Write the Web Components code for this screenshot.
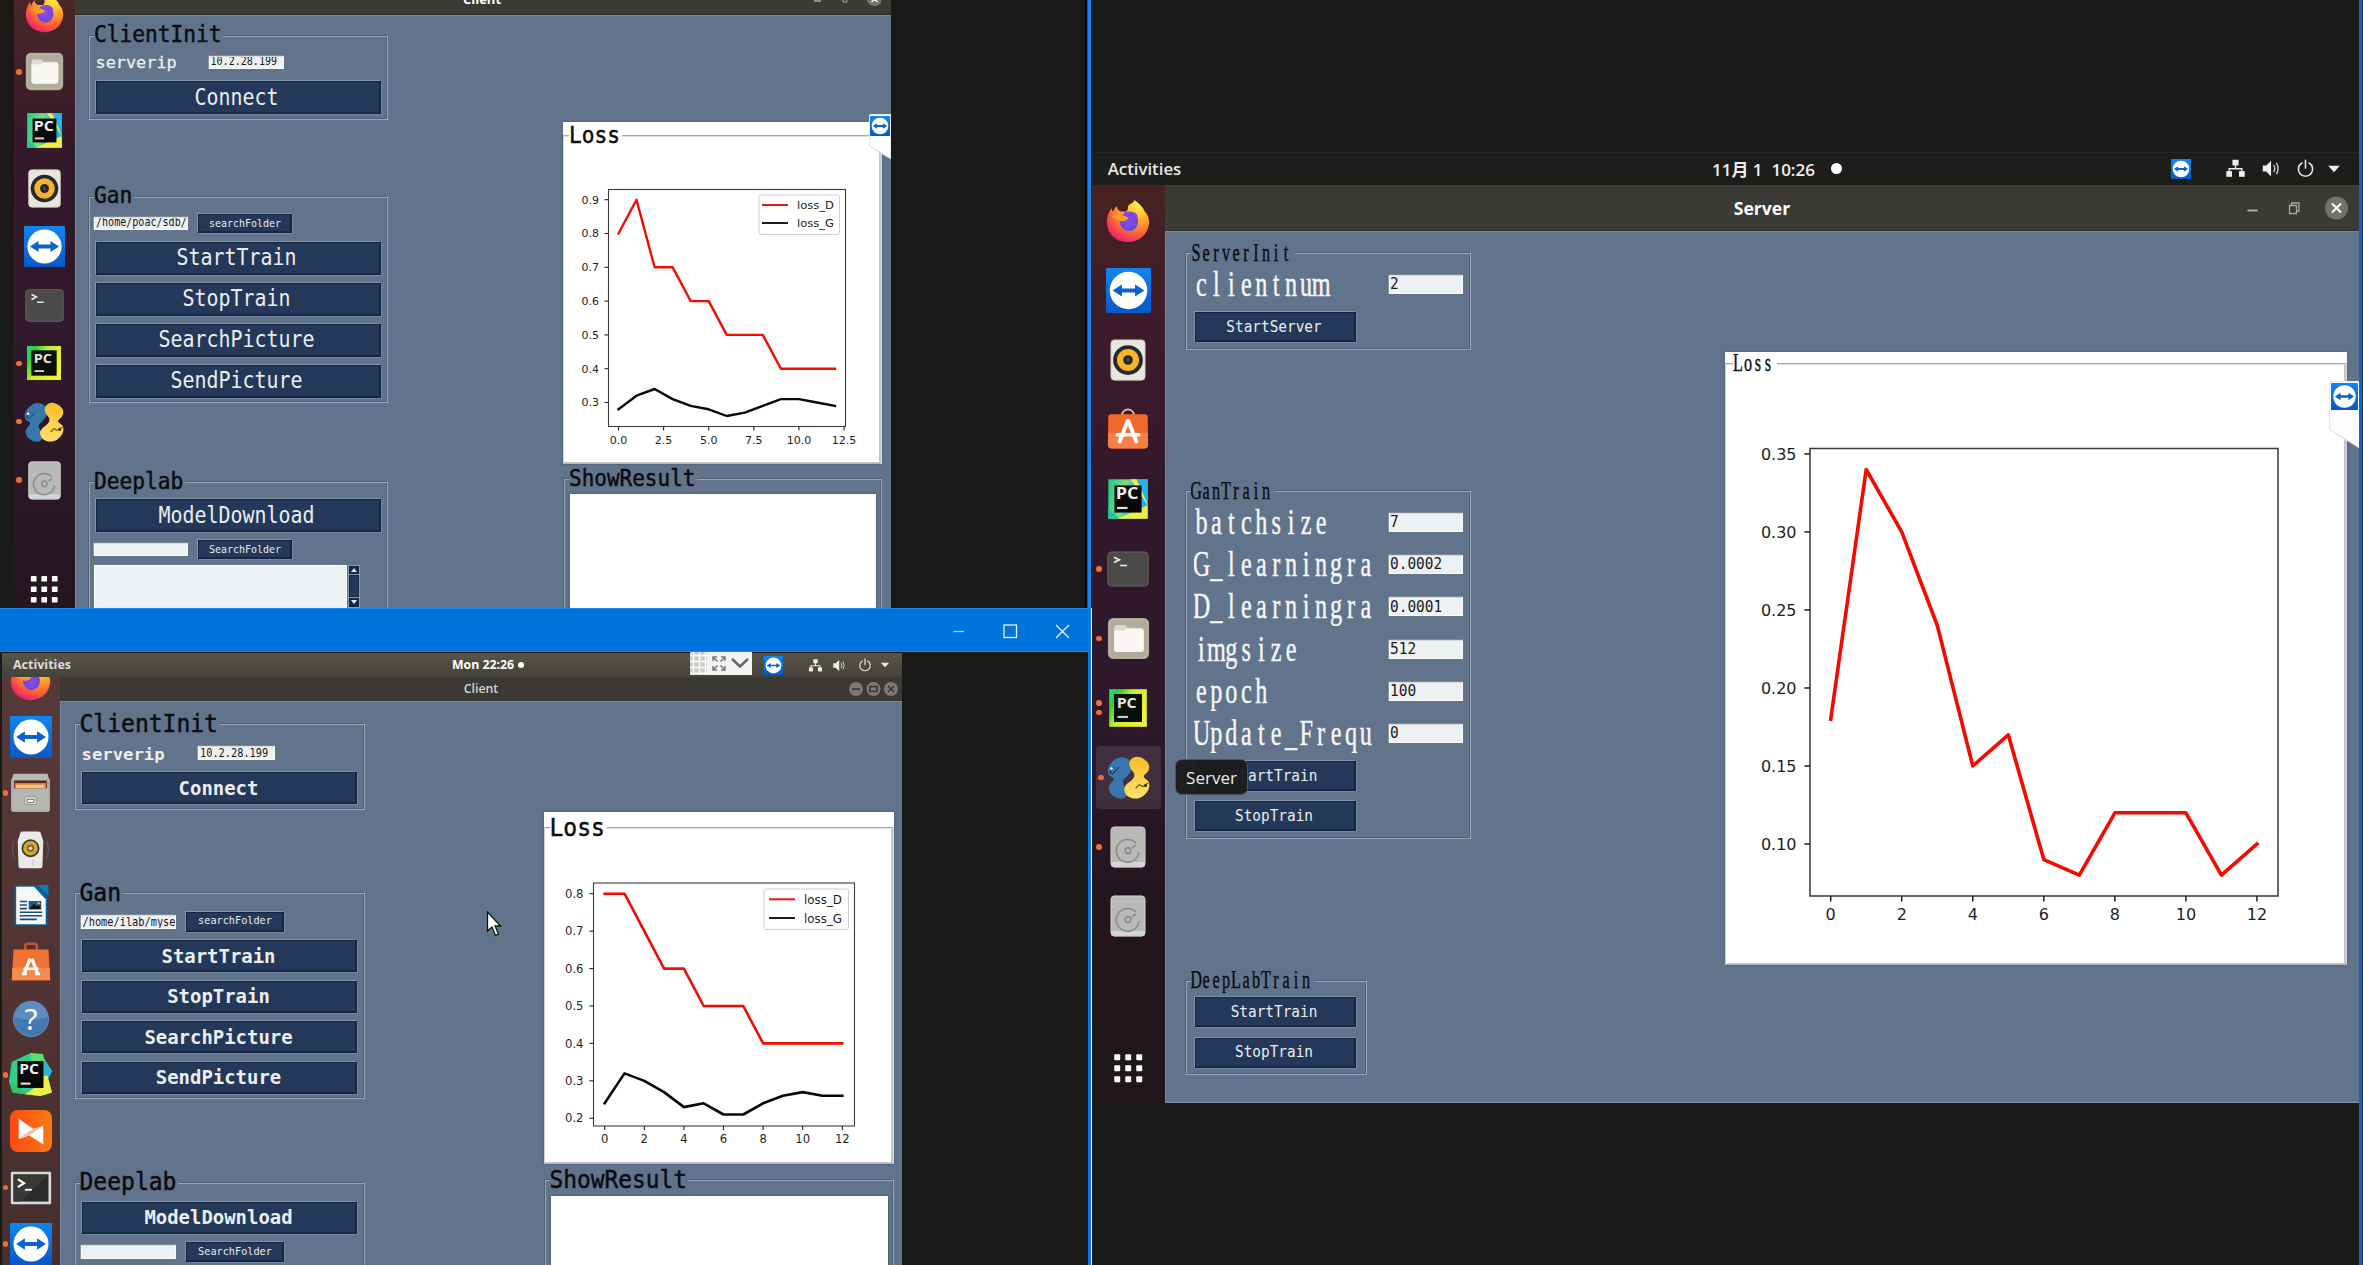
<!DOCTYPE html>
<html lang="en">
<head>
<meta charset="utf-8">
<title>Desktop</title>
<style>
html,body{margin:0;padding:0;background:#191917;overflow:hidden}
</style>
</head>
<body>
<desktop-screen></desktop-screen>
<script>
/* Flow helpers: blocks are given by start and size, and spaced by margins. */
const col=(y0,items)=>{let y=y0;return items.map(([t,h,html,st=''])=>{const m=t-y;y=t+h;
  return `<div style="flex:none;height:${h}px;margin-top:${m}px;${st}">${html}</div>`}).join('')};
const row=(x0,items)=>{let x=x0;return `<div style="display:flex;height:100%">`+items.map(([l,w,html,st=''])=>{const m=l-x;x=l+w;
  return `<div style="flex:none;width:${w}px;margin-left:${m}px;${st}">${html}</div>`}).join('')+`</div>`};

class Base extends HTMLElement{
  constructor(){super();this.attachShadow({mode:'open'})}
  connectedCallback(){this.shadowRoot.innerHTML=this.view()}
}
const def=(n,view)=>customElements.define(n,class extends Base{view(){return view(this)}});
const at=(e,n,d)=>e.hasAttribute(n)?e.getAttribute(n):d;

/* Fixed-advance text, stretched vertically */
def('bit-text',e=>{const a=+at(e,'a',12);
return `<style>:host{display:flex;height:100%;align-items:center;justify-content:${at(e,'j','flex-start')};
 font-family:"DejaVu Sans Mono",monospace;font-size:${(a/.602).toFixed(2)}px;line-height:1;white-space:pre;font-weight:${at(e,'w','400')};-webkit-text-stroke:${at(e,'b','0')}px currentColor}
 span{display:block;transform:translate(${at(e,'dx','0')}px,${at(e,'dy','0')}px) scaleY(${at(e,'k','1')})}</style><span><slot></slot></span>`});

/* Serif glyphs centred in equal cells: t text, a cell width, cap capital height, base baseline, w/h box */
const pen=document.createElement('canvas').getContext('2d');
def('cell-text',e=>{const t=at(e,'t',''),a=+at(e,'a',10),fs=a*1.62,k=+at(e,'cap',16)/(fs*.655),w=+at(e,'w',t.length*a+2),h=+at(e,'h',20);
 pen.font=fs+'px "Liberation Serif"';
 const xs=[...t].map((c,i)=>(i*a+(a-pen.measureText(c).width)/2).toFixed(2)).join(' ');
 return `<style>:host{display:block}svg{display:block;overflow:hidden;font-family:"Liberation Serif",serif;fill:currentColor;stroke:currentColor;stroke-width:${at(e,'b','.25')}}</style>
 <svg width="${w}" height="${h}"><text transform="translate(0,${at(e,'base',16)}) scale(1,${k.toFixed(3)})" font-size="${fs}" x="${xs}" y="0">${t}</text></svg>`});

def('tk-button',e=>`<style>:host{display:block;box-sizing:border-box;height:100%;background:#243859;border:1px solid #14233f;box-shadow:-1px -1px 0 #8495a9,1px 1px 0 #76889d,inset -1px -1px 0 #182947;color:#eceef1}</style>
<bit-text j="center" a="${at(e,'a',12)}" k="${at(e,'k',1)}" w="${at(e,'w',400)}" dx="${at(e,'dx',-1)}"><slot></slot></bit-text>`);

def('tk-entry',e=>`<style>:host{display:block;box-sizing:border-box;height:100%;background:#eef1f4;border:1px solid #fcfcfc;border-top-color:#ddd9d2;box-shadow:0 -1px 0 #7d8996,-1px 0 0 #8996a5;color:#181818;overflow:hidden;padding-left:${at(e,'pl',1)}px}</style>
<bit-text a="${at(e,'a',6)}" k="${at(e,'k',1.1)}"><slot></slot></bit-text>`);

def('tk-frame',e=>`<style>:host{display:flex;flex-direction:column;box-sizing:border-box;height:100%;
 border:1px solid #4d6078;border-right-color:#98a8b9;border-bottom-color:#98a8b9;box-shadow:inset 1px 1px 0 #98a8b9,inset -1px -1px 0 #4d6078}
 :host([white]){border-color:#a8a8a8 #dcdcdc #b4b8bb #cfcfcf;box-shadow:inset 0 1px 0 #dedede,inset -2px -1px 0 #c2c6c8}</style><slot></slot>`);

def('tk-legend',e=>`<style>:host{display:inline-block;height:100%;background:${at(e,'bg','#61748c')};padding:0 2px 0 0;color:#0a0c10}</style>
${e.hasAttribute('t')?`<cell-text t="${at(e,'t')}" a="10" cap="16" base="16.5" h="22"></cell-text>`:`<bit-text a="${at(e,'a',12)}" k="${at(e,'k',1)}" dy="${at(e,'dy',0)}" b=".45"><slot></slot></bit-text>`}`);

/* Line chart, drawn in screen coordinates through the viewBox */
const CHARTS={
 a:{v:[564,136,316,326],box:[608.5,189.5,845.5,426.5],x0:618.5,dx:18.04,xt:[0,2.5,5,7.5,10,12.5],xf:1,yA:.9,yAt:199.7,dy:338,yt:[.9,.8,.7,.6,.5,.4,.3],yf:1,fs:11,lw:2.4,yl:599,xl:443.5,
  D:[.8,.9,.7,.7,.6,.6,.5,.5,.5,.4,.4,.4,.4],G:[.28,.32,.34,.31,.29,.28,.26,.27,.29,.31,.31,.30,.29],
  leg:{r:[759,195,80.5,39.5],x1:762,x2:788,tx:797,tw:37,y:[205,223],fs:11.3}},
 b:{v:[546,828,346,334],box:[593.5,883,854.5,1126],x0:604.7,dx:19.8,xt:[0,2,4,6,8,10,12],xf:0,yA:.8,yAt:893.7,dy:374.3,yt:[.8,.7,.6,.5,.4,.3,.2],yf:1,fs:11.6,lw:2.6,yl:583.5,xl:1143,
  D:[.8,.8,.7,.6,.6,.5,.5,.5,.4,.4,.4,.4,.4],G:[.24,.32,.30,.27,.23,.24,.21,.21,.24,.26,.27,.26,.26],
  leg:{r:[764,889,84.5,40.5],x1:769,x2:795,tx:804,tw:38,y:[899.3,918],fs:12.5}},
 s:{v:[1726,365,619,597],box:[1810,448.5,2278,896],x0:1830.7,dx:35.52,xt:[0,2,4,6,8,10,12],xf:0,yA:.35,yAt:453.9,dy:1560.4,yt:[.35,.3,.25,.2,.15,.1],yf:2,fs:16,lw:3.6,yl:1796.5,xl:920,
  D:[.18,.34,.30,.24,.15,.17,.09,.08,.12,.12,.12,.08,.10]}
};
def('loss-chart',e=>{const c=CHARTS[at(e,'data','a')],X=v=>c.x0+v*c.dx,Y=v=>c.yAt+(c.yA-v)*c.dy,[l,t,r,b]=c.box,s=c===CHARTS.s?1.4:1;
 const pl=(d,k)=>`<polyline fill="none" stroke="${k}" stroke-width="${c.lw}" stroke-linejoin="round" stroke-linecap="square" points="${d.map((v,i)=>X(i).toFixed(1)+','+Y(v).toFixed(1)).join(' ')}"/>`;
 let o=`<rect x="${l}" y="${t}" width="${r-l}" height="${b-t}" fill="none" stroke="#3c3c3c" stroke-width="${1.1*s}"/>`;
 c.xt.forEach(v=>o+=`<line x1="${X(v)}" x2="${X(v)}" y1="${b}" y2="${b+4*s}" stroke="#222" stroke-width="${s*1.1}"/><text x="${X(v)}" y="${c.xl}" text-anchor="middle">${v.toFixed(c.xf)}</text>`);
 c.yt.forEach(v=>o+=`<line x1="${l-4*s}" x2="${l}" y1="${Y(v)}" y2="${Y(v)}" stroke="#222" stroke-width="${s*1.1}"/><text x="${c.yl}" y="${Y(v)+c.fs*.36}" text-anchor="end">${v.toFixed(c.yf)}</text>`);
 if(c.G)o+=pl(c.G,'#080808');
 o+=pl(c.D,'#f50a02');
 if(c.leg){const g=c.leg;o+=`<rect x="${g.r[0]}" y="${g.r[1]}" width="${g.r[2]}" height="${g.r[3]}" rx="2" fill="#fff" stroke="#cfcfcf"/>`;
  [['loss_D','#e01c10'],['loss_G','#1d1d1d']].forEach(([n,k],i)=>o+=`<line x1="${g.x1}" x2="${g.x2}" y1="${g.y[i]}" y2="${g.y[i]}" stroke="${k}" stroke-width="2"/><text x="${g.tx}" y="${g.y[i]+g.fs*.36}" font-size="${g.fs}" textLength="${g.tw}" lengthAdjust="spacingAndGlyphs">${n}</text>`)}
 return `<style>:host{display:block}svg{display:block;font-family:"DejaVu Sans",sans-serif;fill:#1e1e1e}</style><svg width="${c.v[2]}" height="${c.v[3]}" viewBox="${c.v.join(' ')}" font-size="${c.fs}">${o}</svg>`});

/* Icons, 48 x 48 */
const TV=`<circle cx="24" cy="24" r="20" fill="#fff"/><path d="M7 24L17 17.5V21.8H31V17.5L41 24L31 30.5V26.2H17V30.5Z" fill="#0a62cc"/>`;
const ICONS={
tv:`<defs><linearGradient id="t" x1="0" y1="0" x2="0" y2="1"><stop offset="0" stop-color="#0f86f2"/><stop offset="1" stop-color="#0858c8"/></linearGradient></defs><rect width="48" height="48" rx="1.5" fill="url(#t)"/>`+TV,
firefox:`<defs><radialGradient id="f" cx=".72" cy=".12" r="1"><stop offset="0" stop-color="#fff14a"/><stop offset=".35" stop-color="#ffb02a"/><stop offset=".65" stop-color="#ff6a33"/><stop offset="1" stop-color="#e6107a"/></radialGradient><radialGradient id="g"><stop offset="0" stop-color="#8a4bf0"/><stop offset="1" stop-color="#6a49d8"/></radialGradient></defs>
 <path d="M31 1C38 6 41 10 42 13C46 17 47.500 22 47 27C45.500 39 36 47 24 47C11 47 1 38 1 25C1 18 4 13 6 10C6.500 12 7 13 8 14C9 11 10 9 12 8C12 11 14 13 16 13.500H22C24 12 24 11 24 8C26 4 30 5 31 1Z" fill="url(#f)"/>
 <path d="M15 24C15 19 19 14.500 25 14.500C31 15 35 19 35 24.500C35 31 30 35 25 35C19 35 15 30 15 24Z" fill="url(#g)"/>
 <path d="M6 19C12 15 19 17 25 20.500C23 24 18 24.500 15 24C13 23 10 21 6 19Z" fill="#ff9a26"/><path d="M19 15C26 12 34 14 35 20C31 17 25 18 19 15Z" fill="#8c48e8"/>`,
files:`<rect x="1" y="1" width="46" height="46" rx="6" fill="#a39e8c"/><rect x="2.500" y="2.500" width="43" height="43" rx="5" fill="#b0ac9c" stroke="#c4c0b2"/><path d="M8 12Q8 9 11 9H19Q22 9 22.500 12H38Q41 12 41 15V36Q41 39 38 39H11Q8 39 8 36Z" fill="#dcd9cf"/><path d="M8 15H19L21 13H38Q41 13 41 16V36Q41 39 38 39H11Q8 39 8 36Z" fill="#f8f7f4"/>`,
pc:`<defs><linearGradient id="p" x1="0" y1="0" x2="1" y2=".2"><stop offset="0" stop-color="#1fc98c"/><stop offset=".45" stop-color="#7be07a"/><stop offset=".7" stop-color="#28b8f0"/><stop offset="1" stop-color="#19b6f2"/></linearGradient></defs><rect x="1.500" y="1.500" width="45" height="45" fill="url(#p)"/><path d="M27 1.500H34L46.500 30V46.500H12L46.500 31Z" fill="#f1f03e"/><path d="M34 1.500L46.500 28V1.500Z" fill="#27b5f0"/><path d="M1.500 34L14 46.500H1.500Z" fill="#28c4a0"/><rect x="8.500" y="8.500" width="31" height="31" fill="#080808"/><text x="10" y="24.500" font-family="Open Sans,sans-serif" font-weight="700" font-size="17.500" textLength="26" lengthAdjust="spacingAndGlyphs" fill="#eee">PC</text><rect x="11.500" y="33" width="12" height="2.500" fill="#ddd"/>`,
pc2:`<defs><linearGradient id="q" x1="0" y1="0" x2="1" y2=".55"><stop offset="0" stop-color="#1ae08c"/><stop offset=".22" stop-color="#2ccf38"/><stop offset=".5" stop-color="#c6ec30"/><stop offset="1" stop-color="#f2f238"/></linearGradient></defs><rect x="2.500" y="2.500" width="43" height="43" fill="url(#q)"/><rect x="8" y="8" width="32" height="32" fill="#081008"/><text x="11" y="24" font-family="Open Sans,sans-serif" font-weight="700" font-size="16" textLength="23" lengthAdjust="spacingAndGlyphs" fill="#e4e4e4">PC</text><rect x="12" y="33" width="12" height="2.400" fill="#ccc"/>`,
pc3:`<path d="M3 10L24 0L38 4L48 20L43 30L48 44L35 48L18 46L4 44L0 32Z" fill="#2fce8c"/><path d="M24 0L38 1L40 14L26 12Z" fill="#5ee06b"/><path d="M38 10L48 20L42 32Z" fill="#25b2ea"/><path d="M36 26L43 25L48 44L35 48L18 46L30 38Z" fill="#eef04a"/><path d="M0 32L14 38L18 46L4 44Z" fill="#35c46a"/><rect x="9.500" y="9" width="29" height="30" fill="#080808"/><text x="11.500" y="23.500" font-family="Open Sans,sans-serif" font-weight="700" font-size="16.500" textLength="22" lengthAdjust="spacingAndGlyphs" fill="#eee">PC</text><rect x="13" y="33" width="11" height="2.400" fill="#ddd"/>`,
rb:`<rect x="4.500" y="1" width="39" height="46" rx="4" fill="#e9e6dd" stroke="#c9c5ba"/><circle cx="24" cy="24" r="17" fill="#26282c"/><circle cx="24" cy="24" r="12.600" fill="#f6b42a"/><circle cx="24" cy="24" r="5.500" fill="#24262a"/><circle cx="24" cy="24" r="2" fill="#4a4a4e"/>`,
rb2:`<path d="M5 14Q1 24 5 34M43 14Q47 24 43 34" stroke="#4f5a78" stroke-width="1.500" fill="none"/><path d="M12 5Q12 3 15 3H33Q36 3 36 5L39 14L38 43Q38 46 35 46H13Q10 46 10 43L9 14Z" fill="#e9e9e9"/><circle cx="24" cy="22.500" r="10.500" fill="#3b3a30"/><circle cx="24" cy="22.500" r="8.500" fill="#d8a81c"/><circle cx="24" cy="22.500" r="4.300" fill="#6e6a55"/><circle cx="24" cy="22.500" r="2" fill="#ddd"/><path d="M27 36V43" stroke="#bbb"/>`,
term:`<rect x="1" y="4.500" width="46" height="39" rx="4" fill="#4a4a48" stroke="#6a6a68"/><path d="M8 10.500L14 13.500L8 16.500" stroke="#eee" stroke-width="2" fill="none"/><path d="M15 20H23" stroke="#eee" stroke-width="1.800"/>`,
term2:`<rect x="1" y="5.500" width="46" height="37" rx="1.500" fill="#dadada"/><rect x="4" y="8.500" width="40" height="31" fill="#2b2b29"/><path d="M4 8.500H44L12 39.500H4Z" fill="#383836"/><path d="M9 14L16 18.500L9 23" stroke="#fff" stroke-width="2.500" fill="none"/><path d="M17 26H25" stroke="#fff" stroke-width="2.200"/>`,
soft:`<path d="M17 8C17 -2 31 -2 31 8" fill="none" stroke="#e8b79a" stroke-width="2.200"/><path d="M4 6H44Q46.500 6 46.500 9L47 40Q47 45 43 45H5Q1 45 1 40L1.500 9Q1.500 6 4 6Z" fill="#f2692c"/><path d="M1.500 27H46.500L47 40Q47 45 43 45H5Q1 45 1 40Z" fill="#f58048"/><g stroke="#fff" stroke-linecap="round" fill="none"><path d="M23.500 14L14.500 37M24.500 14L33.500 37" stroke-width="4.500"/><path d="M11.500 29.500H36.500" stroke-width="4"/></g>`,
soft2:`<path d="M17 12V5Q17 2 20 2H28Q31 2 31 5V12" fill="none" stroke="#c8542a" stroke-width="3"/><path d="M3 9H45L47 46H1Z" fill="#f07332"/><path d="M1.500 31H46.500L47 46H1Z" fill="#f58a50"/><g stroke="#fff" fill="none"><path d="M23 20L16 38M25 20L32 38" stroke-width="4"/><path d="M15 32H33M13 38.500H19M29 38.500H35" stroke-width="3"/></g>`,
py:`<defs><linearGradient id="y" x1="0" y1="0" x2="0" y2="1"><stop offset="0" stop-color="#f9bd28"/><stop offset="1" stop-color="#ffe16b"/></linearGradient></defs><path d="M10 3C16 0 22 1 26 6C30 12 28 17 22 23C17 27 16 29 21 36C24 40 23 44 19 47C13 49 6 46 3 40C0 34 4 31 7 27C9 24 5 24 2 21C-1 16 2 8 10 3Z" fill="#3777ad"/><path d="M8 12L3 18L6 20L13 13" fill="none" stroke="#1c3550" stroke-width="1.200"/><circle cx="5" cy="14" r="1.500" fill="#fff"/><path d="M29 2C35 -1 42 3 46 8C49 13 46 18 42 21C39 24 43 25 46 28C49 33 47 40 40 45C34 49 27 48 22 44C18 38 18 34 25 29C32 24 32 20 27 15C24 10 24 5 29 2Z" fill="url(#y)"/><path d="M32 36L36 32L40 34L46 30" fill="none" stroke="#6a5510" stroke-width="1.300"/><circle cx="43" cy="33" r="1.700" fill="#332800"/>`,
disc:`<rect x="4.500" y="1" width="39" height="46" rx="4" fill="#b9b9b7" stroke="#d4d4d2"/><path d="M5 41H43V43Q43 46.500 39 46.500H9Q5 46.500 5 43Z" fill="#d6d6d4"/><path d="M33.500 19.500L29.500 23M33.500 17.500A13 13 0 1 0 37 28" stroke="#8a8a88" stroke-width="1.800" fill="none" transform="translate(-.5 2)"/><circle cx="24" cy="28" r="3.300" fill="none" stroke="#8a8a88" stroke-width="1.800"/>`,
cab:`<path d="M4 2H44L46 10H2Z" fill="#b8b8b6"/><rect x="2" y="8" width="44" height="38" rx="1.500" fill="#a6a6a4" stroke="#d0d0ce"/><rect x="5" y="10" width="38" height="9" fill="#5a2a14"/><path d="M6 13H42V19H6Z" fill="#e88c3a"/><path d="M7 15H40V19H7Z" fill="#f4c08a"/><rect x="3" y="20" width="42" height="25" fill="#b6b6b4"/><rect x="17" y="29" width="14" height="9" rx="2" fill="#d8d8d6" stroke="#8c8c8a"/><rect x="20" y="32" width="8" height="3.500" fill="#fff" stroke="#666"/>`,
writer:`<path d="M7 1H43V46H6V3Z" fill="#0e6092"/><path d="M32 1H44V13Z" fill="#0d7abf"/><path d="M8 3H28L41 17V45H8Z" fill="#f6f8fa"/><g stroke="#164f78" stroke-width="1.800"><path d="M12 19.500H20M12 23.500H20M12 27.500H20M12 31.500H37M12 35.500H37M12 39.500H31"/></g><rect x="22" y="19" width="14" height="9.500" fill="#1d5a88"/><path d="M23 28L28 22L31 25L33 23L36 28Z" fill="#111"/><circle cx="33" cy="21.500" r="1.400" fill="#f0b040"/>`,
help:`<circle cx="24" cy="24" r="20" fill="#4478b2" stroke="#6a97c8"/><path d="M5 22A19 19 0 0 1 43 22Q24 28 5 22Z" fill="#5b8cc2"/><text x="24" y="37" text-anchor="middle" font-family="Noto Sans,sans-serif" font-size="34" fill="#fff">?</text>`,
orange:`<defs><linearGradient id="o" x1="0" x2="1"><stop offset="0" stop-color="#fb4a12"/><stop offset="1" stop-color="#fb7a16"/></linearGradient></defs><rect width="48" height="48" rx="9" fill="url(#o)"/><path d="M10 10L27 22L38 18V39L22 29L10 33Z" fill="#fff"/><path d="M12 31L27 21L36 19L22 29Z" fill="#f7bf9d"/>`,
grid:`<g fill="#fff">${[9,21,33].map(y=>[9,21,33].map(x=>`<rect x="${x}" y="${y}" width="6.500" height="6.500" rx="1"/>`).join('')).join('')}</g>`,
net:`<g fill="#eee"><rect x="17" y="4" width="14" height="13"/><rect x="3" y="30" width="13" height="13"/><rect x="32" y="30" width="13" height="13"/><path d="M22.500 16H25.500V23H40V31H37V26H11V31H8V23H22.500Z"/></g>`,
vol:`<path d="M4 17H12L23 6V42L12 31H4Z" fill="#eee"/><path d="M29 16Q34 24 29 32M35 11Q43 24 35 37" stroke="#ccc" stroke-width="3.200" fill="none"/>`,
power:`<path d="M15 10A18 18 0 1 0 33 10M24 3V23" fill="none" stroke="#e8e8e8" stroke-width="4" stroke-linecap="round"/>`,
arrow:`<path d="M10 16H38L24 32Z" fill="#eee"/>`
};
def('app-icon',e=>{const s=at(e,'s',40);return `<style>:host{display:block;width:${s}px;height:${s}px;flex:none}svg{display:block;overflow:visible}</style><svg width="${s}" height="${s}" viewBox="0 0 48 48">${ICONS[at(e,'n','tv')]}</svg>`});

/* Launcher column: every entry has the same pitch; dots mark running windows.
   shift scrolls the column up under the bar above it. */
def('side-dock',e=>{const p=+at(e,'pitch',58),cx=at(e,'cx',30),dx=at(e,'dx',5);
 return `<style>:host{display:flex;flex-direction:column;width:100%;height:100%;padding-top:${at(e,'top',0)}px;box-sizing:border-box;overflow:hidden}
 .i{display:grid;grid-template-columns:${dx*2}px 1fr;height:${p}px;flex:none;align-items:center}
 .i:first-of-type{margin-top:${-at(e,'shift',0)}px}
 .d{display:flex;flex-direction:column;gap:4px;align-items:center}.d i{width:5.500px;height:5.500px;border-radius:50%;background:#f06c38}
 .w{display:flex;justify-content:center;margin-left:${-dx*2}px;width:${cx*2}px}
 .hl{background:rgba(130,110,130,.27);border-radius:4px;margin:3px 4px 3px 4px;height:${p-6}px}.hl .d{margin-left:-4px}.hl .w{margin-left:${-dx*2-4}px}</style>`+
 at(e,'items','').split(' ').map(t=>{const [n,s,d=0,h]=t.split(':');return `<div class="i ${h?'hl':''}"><div class="d">${'<i></i>'.repeat(+d)}</div><div class="w"><app-icon n="${n}" s="${s}"></app-icon></div></div>`}).join('')+
 `<div style="flex:none;margin-top:${at(e,'gap',0)}px;width:${cx*2}px;display:flex;justify-content:center"><app-icon n="grid" s="${at(e,'gs',44)}"></app-icon></div>`});

def('side-tab',e=>{const w=+at(e,'w',22),h=+at(e,'h',45),s=+at(e,'s',20);
 return `<style>:host{display:block;width:${w}px;height:${h}px}svg{position:absolute;left:0;top:0}app-icon{position:absolute;left:${w-s-1.5}px;top:2px}</style>
 <svg width="${w}" height="${h}"><path d="M${w} 0H3Q0 0 0 3V${h*.66}Q0 ${h*.72} 3 ${h*.75}L${w} ${h}Z" fill="#fdfdfd" stroke="#d4d9de"/></svg><app-icon n="tv" s="${s}"></app-icon>`});

const FORM={
 a:{x:75,y:15,l:88,w:300,lt:95,la:12.75,lk:1.06,fr:[[34.5,85],[195.5,207],[481,140]],ly:[35,196,481.5],
    sx:95.5,sa:10.15,sk:.9,sy:63.5,ex:208.5,ew:75.5,ey:56,eh:13,ip:6.05,bx:96,bw:285,bh:33,cb:81,ba:12,bk:1.12,bwt:400,bdx:-2,
    py:217,px:94,pw:94,path:'/home/poac/sdb/g',qx:198,qw:94,qy:214,qh:19,qa:6,gb:[241.5,282.5,323.5,364.5],md:499,py2:543,qy2:540,list:1,
    rx:563,rw:319,ry:122,rline:135,rb:464,rlt:570,rly:135.5,sh:478,shy:478.5,wx:569.5,ww:306.5,wy:494,chart:'a',cx:564,cy:136},
 b:{x:60,y:701,l:73.5,w:291,lt:80.5,la:13.85,lk:1.1,fr:[[723,87],[891.5,207.5],[1181.5,140]],ly:[723.5,892.5,1182],
    sx:81.5,sa:10.4,sk:.92,sy:754.5,ex:198,ew:77,ey:745.5,eh:14,ip:6.2,bx:82,bw:275,bh:32,cb:772,ba:11.4,bk:1.02,bwt:700,bdx:-1,
    py:914.5,px:80.5,pw:95,path:'/home/ilab/myse',qx:186,qw:98,qy:911.5,qh:20,qa:6.15,gb:[940,980.5,1021,1061.5],md:1201.5,py2:1245,qy2:1242,
    rx:544,rw:350,ry:812,rline:827,rb:1164,rlt:550.5,rly:828,sh:1178.5,shy:1179,wx:550.5,ww:337.5,wy:1196,chart:'b',cx:546,cy:828}
};
def('client-form',e=>{const f=FORM[at(e,'kind','a')],ix=f.l+1;
 const leg=(y,t)=>[y-12,24,row(ix,[[f.lt-1,150,`<tk-legend a="${f.la}" k="${f.lk}">${t}</tk-legend>`]])];
 const btn=(y,t)=>[y,f.bh,row(ix,[[f.bx,f.bw,`<tk-button a="${f.ba}" k="${f.bk}" w="${f.bwt}" dx="${f.bdx}">${t}</tk-button>`]])];
 const pick=(py,qy,t,b)=>[qy,f.qh,row(ix,[[f.px,f.pw,`<tk-entry a="${f.ip}" k="1.15">${t}</tk-entry>`,`height:${f.eh}px;margin-top:${py-qy}px`],[f.qx,f.qw,`<tk-button a="${f.qa}" k="1.1" dx="0">${b}</tk-button>`]])];
 const fr=(i,items)=>[f.fr[i][0],f.fr[i][1],`<tk-frame>${col(f.fr[i][0]+1,items)}</tk-frame>`];
 const list=f.list?[[565,60,row(ix,[[94,253,'<div style="height:100%;box-sizing:border-box;border:1px solid #fff;background:#eef1f4"></div>'],
   [348,12,`<svg width="12" height="43" style="display:block"><rect width="12" height="43" fill="#8b9caf"/><rect x="1" y="1" width="10" height="8" fill="#14264a"/><rect x="1.500" y="10.500" width="9" height="21" fill="#243859" stroke="#14264a"/><rect x="1" y="33" width="10" height="9" fill="#14264a"/><path d="M3 7L6 3L9 7ZM3 35H9L6 39Z" fill="#e8eaee"/></svg>`]])]]:[];
 const left=col(f.y,[
  fr(0,[leg(f.ly[0],'ClientInit'),[f.sy-10,20,row(ix,[[f.sx,90,`<bit-text a="${f.sa}" k="${f.sk}" w="${f.bwt}" b="${f.bwt>400?0:.3}" style="color:#eceef0">serverip</bit-text>`],
    [f.ex,f.ew,`<tk-entry a="${f.ip}" k="1.15">10.2.28.199</tk-entry>`,`height:${f.eh}px;margin-top:${f.ey-f.sy+10}px`]])],btn(f.cb,'Connect')]),
  fr(1,[leg(f.ly[1],'Gan'),pick(f.py,f.qy,f.path,'searchFolder'),...['StartTrain','StopTrain','SearchPicture','SendPicture'].map((t,i)=>btn(f.gb[i],t))]),
  fr(2,[leg(f.ly[2],'Deeplab'),btn(f.md,'ModelDownload'),pick(f.py2,f.qy2,'','SearchFolder'),...list])]);
 const right=col(f.y,[
  [f.ry,f.rb-f.ry,col(f.ry,[[f.rline,f.rb-f.rline,`<tk-frame white>${col(f.rline+1,[[f.rly-12,24,row(f.rx+1,[[f.rlt-1,70,`<tk-legend bg="#fff" a="${f.la}" k="${f.lk}">Loss</tk-legend>`]])],
     [f.cy,CHARTS[f.chart].v[3],row(f.rx+1,[[f.cx,CHARTS[f.chart].v[2],`<loss-chart data="${f.chart}"></loss-chart>`]]),'margin-top:'+(f.cy-f.rly-12)+'px']])}</tk-frame>`]]),'background:#fff;display:flex;flex-direction:column;box-shadow:0 0 2px #44566e'],
  [f.sh,150,`<tk-frame>${col(f.sh+1,[[f.shy-12,24,row(f.rx+1,[[f.rlt-1,160,`<tk-legend a="${f.la-.1}" k="${f.lk}">ShowResult</tk-legend>`]])],
    [f.wy,140,row(f.rx+1,[[f.wx,f.ww,'<div style="height:100%;background:#fff;box-shadow:0 0 2px #3c4d64"></div>']])]])}</tk-frame>`]]);
 return `<style>:host{display:block;height:100%;overflow:hidden;background:#61748c;box-shadow:inset 1px 1px 0 #7589a2}.c{display:flex;flex-direction:column;height:100%}</style>`+
  row(f.x,[[f.l,f.w,`<div class="c">${left}</div>`],[f.rx,f.rw,`<div class="c">${right}</div>`]])});

def('server-form',()=>{
 const leg=(y,t)=>[y-10,20,row(1185.5,[[1191,150,`<tk-legend t="${t}"></tk-legend>`]])];
 const btn=(y,t)=>[y,30,row(1185.5,[[1195,161,`<tk-button a="8.68" k="1.04" dx="-1.500">${t}</tk-button>`]])];
 const fld=(y,t,v)=>[y-5,34,row(1185.5,[[1193.5,182.5,`<cell-text t="${t}" a="14.950" cap="23" base="26" w="182.500" h="34" b=".3" style="color:#f6f7f8"></cell-text>`],[1389,74,`<tk-entry a="8.700" k="1.08" pl="0">${v}</tk-entry>`,'height:19px;margin-top:5px']])];
 const left=col(231,[
  [251.5,98,`<tk-frame>${col(252.5,[leg(253.5,'ServerInit'),fld(275,'clientnum','2'),btn(312,'StartServer')])}</tk-frame>`],
  [490,348.5,`<tk-frame>${col(491,[leg(491.5,'GanTrain'),...[['batchsize','7'],['G_learningrat','0.0002'],['D_learningrat','0.0001'],['imgsize','512'],['epoch','100'],['Update_Freque','0']].map(([t,v],i)=>fld(513+i*42.2,t,v)),btn(761,'StartTrain'),btn(801.5,'StopTrain')])}</tk-frame>`],
  [979.5,95.5,`<tk-frame style="width:182px">${col(980.5,[leg(981,'DeepLabTrain'),btn(997,'StartTrain'),btn(1037.5,'StopTrain')])}</tk-frame>`]]);
 const right=col(231,[[352,613,col(352,[[363,602,`<tk-frame white>${col(364,[[354,20,row(1725.5,[[1733,60,`<tk-legend t="Loss" bg="#fff"></tk-legend>`]])],
   [374,588,`<loss-chart data="s" style="margin-top:-9px"></loss-chart>`]])}</tk-frame>`]]),'background:#fff;display:flex;flex-direction:column;box-shadow:0 0 2px #44566e']]);
 return `<style>:host{display:block;height:100%;overflow:hidden;background:#61748c;box-shadow:inset 1px 1px 0 #7589a2,inset 0 -1px 0 #8093aa}.c{display:flex;flex-direction:column;height:100%}</style>`+
  row(1165,[[1184.5,286.5,`<div class="c">${left}</div>`],[1724.5,622,`<div class="c">${right}</div>`]])});

const ui='font-family:&quot;Open Sans&quot;,&quot;Noto Sans CJK SC&quot;,sans-serif;';
const mid='display:flex;align-items:center;justify-content:center;white-space:pre;';
const ic=(cx,s,n)=>[cx-s/2,s,`<app-icon n="${n}" s="${s}"></app-icon>`,'display:flex;align-items:center'];

def('desktop-screen',()=>`<style>
:host{display:block;position:relative;width:2363px;height:1265px;overflow:hidden;background:#191917}
section{position:absolute;overflow:hidden;display:flex;flex-direction:column}
.over{position:absolute}
.body{display:flex;flex:1;min-height:0}
</style>
<section style="left:0;top:0;width:1087px;height:608px"><div class="body">
 <div style="flex:none;margin-left:14px;width:61px;background:linear-gradient(#4a2627,#34192a 25%,#311a2b 55%,#24151e)"><side-dock cx="30.2" dx="5" shift="15.500" pitch="58.300" items="firefox:39 files:39:1 pc:37 rb:39 tv:41 term:39 pc2:38:1 py:40:1 disc:39:1" gap="58.500" gs="42"></side-dock></div>
 <div style="flex:none;width:816px;display:flex;flex-direction:column">
  <div style="flex:none;height:14px;border-bottom:1px solid #2a2a2a;background:#3c3a37">${row(75,[[432,100,'Client',mid+ui+'color:#fff;font-weight:700;font-size:13px;height:20px;margin-top:-11px'],
   [811,70,`<svg width="70" height="8" style="display:block"><path d="M3 1H10" stroke="#aaa" stroke-width="1.500"/><path d="M32 0V2H36V0" stroke="#aaa" fill="none"/><circle cx="63.500" cy="-2" r="8" fill="#777570"/><path d="M60.500 2L66.500 -4M66.500 2L60.500 -4" stroke="#eee" stroke-width="1.500"/></svg>`]])}</div>
  <client-form kind="a" style="flex:1;min-height:0"></client-form></div></div></section>
<side-tab class="over" style="left:869px;top:114px" w="22" h="45" s="20"></side-tab>

<section style="left:1092px;top:0;width:1267px;height:1265px">
 <div style="flex:none;height:33px;margin-top:152px;background:#1d1d1b;box-shadow:inset 0 1px 0 #262624;${ui}color:#efefef">${row(1092,[[1104.5,80,'Activities',mid+'font-size:16.8px;font-weight:600;color:#e6e6e6'],
  [1709,109,'11月 1  10:26',mid+'font-size:17px;font-weight:600'],[1831,11,'<div style="width:11px;height:11px;border-radius:50%;background:#fff"></div>','display:flex;align-items:center'],
  ic(2181,20,'tv'),ic(2235.5,21,'net'),ic(2271,21,'vol'),ic(2305,19,'power'),ic(2334,20,'arrow')])}</div>
 <div class="body" style="flex:none;height:918px">
  <div style="flex:none;width:73px;background:linear-gradient(#47221f,#3d1c2a 15%,#32182c 35%,#2d1829 60%,#22151c 80%,#20151a)"><side-dock cx="36" dx="7" top="1.500" pitch="69.500" items="firefox:44 tv:45 rb:42 soft:42 pc:42 term:42:1 files:43:1 pc2:42:2 py:43:1:h disc:42:1 disc:42" gap="95" gs="44"></side-dock></div>
  <div style="flex:none;width:1194px;display:flex;flex-direction:column">
   <div style="flex:none;height:46px;background:#3c3a37;box-shadow:inset 0 1px 0 #46443f,inset 0 -1px 0 #32302d">${row(1165,[[1722,80,'Server',mid+ui+'color:#fff;font-weight:700;font-size:17.6px'],
    [2240,110,`<svg width="110" height="46" style="display:block"><path d="M7.500 25.500H17.500" stroke="#b8b6b2" stroke-width="1.800"/><path d="M49.500 20.500H56.500V28.500H49.500ZM51.500 20V18H59V26H57" stroke="#aaa8a4" stroke-width="1.300" fill="none"/><circle cx="96.500" cy="23" r="11.500" fill="#74726e"/><path d="M92 18.500L101 27.500M101 18.500L92 27.500" stroke="#fff" stroke-width="2"/></svg>`]])}</div>
   <server-form style="flex:1;min-height:0"></server-form></div></div></section>
<div class="over" style="left:1175px;top:759px;width:73px;height:36px;border-radius:7px;background:rgba(27,28,28,.96);border:1px solid #4b5661;box-sizing:border-box;color:#ececec;font-size:17px;${mid}${ui}">Server</div>
<side-tab class="over" style="left:2328.5px;top:381px" w="30.500" h="67" s="27"></side-tab>
<div class="over" style="left:1085px;top:0;width:2px;height:1265px;background:#050505"></div>
<div class="over" style="left:1087px;top:0;width:4px;height:1265px;background:#1683f2;border-left:1px solid #0a5cb8;box-sizing:border-box"></div>
<div class="over" style="left:2359px;top:0;width:3px;height:1265px;background:#0868cf"></div><div class="over" style="left:2362px;top:0;width:1px;height:1265px;background:#0b3260"></div>

<section style="left:0;top:608px;width:1091px;height:657px;background:#191917;border-right:3px solid #0a78e4;box-sizing:border-box">
 <div style="flex:none;height:44px;background:#0073dd;box-shadow:inset 0 1px 0 #1a8bf3,inset 0 -1px 0 #1788ee">${row(0,[[945,130,`<svg width="130" height="44" style="display:block" fill="none" stroke="#e9f4ff" stroke-width="1.300"><path d="M8.500 23.500H19" stroke="#a8d4fa"/><rect x="59" y="17" width="12.500" height="12.500"/><path d="M111 17L124 30M124 17L111 30"/></svg>`]])}</div>
 <div style="flex:none;height:25px;width:900px;margin-left:2px;border-top:1px solid #0a0a0a;box-sizing:border-box;background:linear-gradient(#57544a,#454239);color:#f2f2f2;${ui}">${row(2,[[11,62,'Activities',mid+'font-size:12.5px;font-weight:700;color:#ddd;margin-top:-1px'],[447,72,'Mon 22:26',mid+'font-size:12.3px;font-weight:700;color:#fff;margin-top:-1px'],
  [518,6,'<div style="width:6px;height:6px;border-radius:50%;background:#fff"></div>','display:flex;align-items:center;margin-top:-1px'],
  [690,62,`<svg width="62" height="23" style="display:block;margin-top:-1px"><rect width="62" height="24" fill="#f4f4f4"/><rect width="17" height="23" fill="#cbcbcb"/><path d="M0 3.500H17M0 9.500H17M0 15.500H17M0 21.500H17M3.500 0V23M9.500 0V23M15.500 0V23" stroke="#fff" stroke-width="1.500"/><path d="M23 9V5H27M31 5H35V9M35 14V18H31M27 18H23V14M24 6L27.500 9.500M34 6L30.500 9.500M34 17L30.500 13.500M24 17L27.500 13.500" fill="none" stroke="#777" stroke-width="1.500"/><path d="M42 7L50 14.500L58 7" fill="none" stroke="#666" stroke-width="2.600"/></svg>`],
  ic(773,19,'tv'),ic(815,15,'net'),ic(839,15,'vol'),ic(864.5,14,'power'),ic(885,14,'arrow')])}</div>
 <div class="body" style="width:900px;margin-left:2px;flex:1">
  <div style="flex:none;width:58px;background:linear-gradient(#57393a,#4f3232 60%,#46302f)"><side-dock cx="28.700" dx="3.500" pitch="56.400" shift="25" items="firefox:41 tv:42 cab:41:1 rb2:41 writer:43 soft2:40 help:42 pc3:43:1 orange:42 term2:42:1 tv:42:1"></side-dock></div>
  <div style="flex:none;width:842px;display:flex;flex-direction:column">
   <div style="flex:none;height:24px;background:#3b3933">${row(60,[[431,100,'Client',mid+ui+'color:#d8d4cc;font-size:12.3px;font-weight:600;margin-top:-1px'],
    [846,56,`<svg width="56" height="24" style="display:block"><g fill="#7c7a74"><circle cx="10" cy="12" r="7"/><circle cx="27.500" cy="12" r="7"/><circle cx="45" cy="12" r="7"/></g><g stroke="#34322d" stroke-width="1.500" fill="none"><path d="M6 12H14"/><rect x="24" y="9.500" width="7" height="5"/><path d="M42 9L48 15M48 9L42 15"/></g></svg>`]])}</div>
   <client-form kind="b" style="flex:1;min-height:0"></client-form></div></div></section>
<svg class="over" style="left:486px;top:911px" width="16" height="28"><path d="M1.500 1V20L6 16L9.500 24.500L12.500 23L9 15H14.500Z" fill="#fff" stroke="#111" stroke-width="1.300"/></svg>
<div class="over" style="left:1091px;top:608px;width:1px;height:657px;background:#f4f6f8"></div>`);
</script>
</body>
</html>
